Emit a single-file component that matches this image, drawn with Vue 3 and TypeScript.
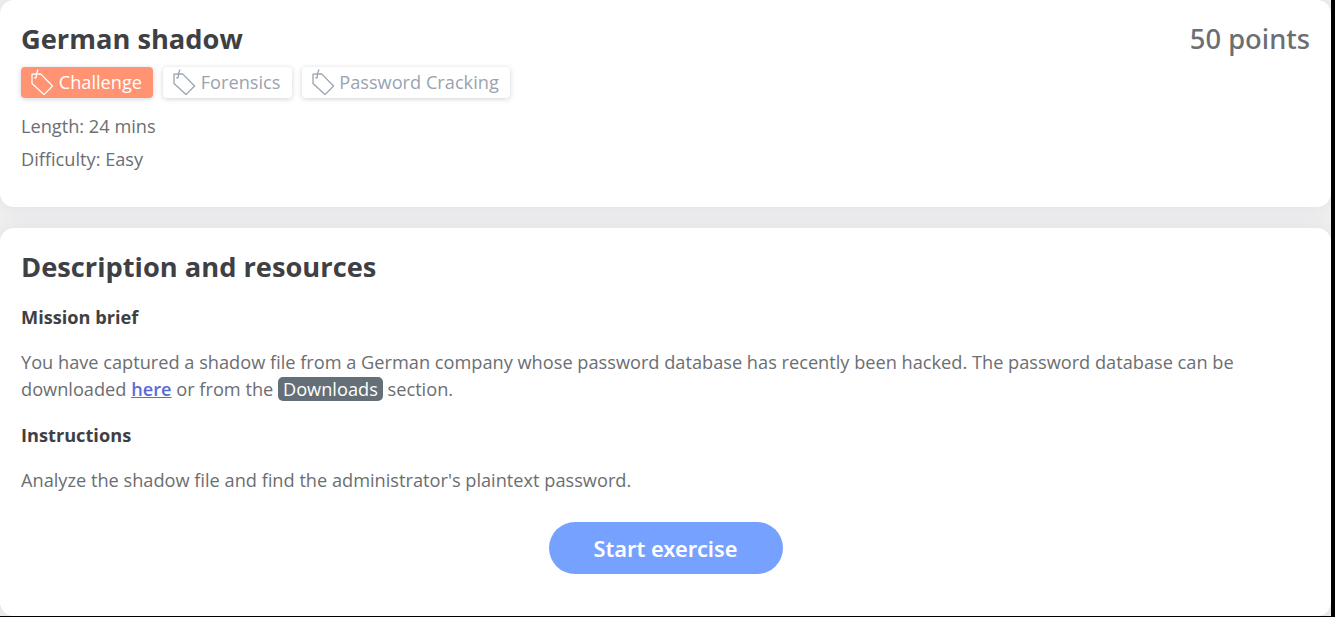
<script setup lang="ts">
interface Tag {
  label: string
  active: boolean
}

const tags: Tag[] = [
  { label: 'Challenge', active: true },
  { label: 'Forensics', active: false },
  { label: 'Password Cracking', active: false },
]
</script>

<template>
  <div class="page">
    <main class="content">
      <section class="card summary">
        <header class="summary-head">
          <h1>German shadow</h1>
          <span class="points">50 points</span>
        </header>
        <div class="tags">
          <span v-for="tag in tags" :key="tag.label" class="tag" :class="{ active: tag.active }">
            <svg class="tag-icon" width="24" height="28" viewBox="0 0 24 28" fill="none" stroke="currentColor" stroke-width="1.3" stroke-linejoin="round" stroke-linecap="round">
              <path d="M2 5.2L10.6 4.9L22.6 17L14 25.6L2 14.4Z" />
              <path d="M7.8 1L6.3 5.2V8.2Q5.6 9.6 4.8 8.6" />
            </svg>
            <span class="tag-label">{{ tag.label }}</span>
          </span>
        </div>
        <p class="meta">Length: 24 mins</p>
        <p class="meta">Difficulty: Easy</p>
      </section>

      <section class="card details">
        <h1>Description and resources</h1>
        <h2>Mission brief</h2>
        <p>
          You have captured a shadow file from a German company whose password database has recently been hacked. The password database can be downloaded <a href="#">here</a> or from the <span class="chip">Downloads</span> section.
        </p>
        <h2>Instructions</h2>
        <p>Analyze the shadow file and find the administrator's plaintext password.</p>
        <button type="button" class="start">Start exercise</button>
      </section>
    </main>
  </div>
</template>

<style>
body {
  background: #000;
  overflow: hidden;
}
</style>

<style scoped>
.page {
  box-sizing: border-box;
  height: 617px;
  padding: 0 4px 1px 0;
  background: #000;
  font-family: "Open Sans", "Noto Sans", sans-serif;
  font-size: 18.2px;
  color: #6b6e72;
}

.content {
  display: flex;
  flex-direction: column;
  gap: 21px;
  height: 616px;
  overflow: hidden;
  background: #f0f0f1;
}

.card {
  box-sizing: border-box;
  padding: 20px 21px;
  border-radius: 14px;
  background: #fff;
  box-shadow: 0 0 20px rgba(50, 50, 75, 0.09);
}

.summary {
  height: 207px;
}

.details {
  display: flex;
  flex-direction: column;
  height: 388px;
}

h1 {
  margin: 0;
  font-size: 27.25px;
  line-height: 38px;
  font-weight: 700;
  color: #3e4044;
}

.summary-head {
  display: flex;
  justify-content: space-between;
}

.points {
  font-family: "Noto Sans", "Open Sans", sans-serif;
  font-size: 27.3px;
  line-height: 38px;
  font-weight: 500;
}

.tags {
  display: flex;
  gap: 10px;
  margin: 9px 0 12px;
}

.tag {
  display: flex;
  align-items: center;
  box-sizing: border-box;
  height: 31px;
  padding: 0 11px 0 9px;
  border-radius: 4px;
  background: #fff;
  color: #9aa3b0;
  box-shadow: 0 1px 5px rgba(70, 80, 100, 0.25);
}

.tag.active {
  background: #ff9372;
  color: #fff;
}

.tag-icon {
  flex: none;
  margin-right: 4.7px;
}

.tag-label {
  padding-bottom: 2px;
}

.meta {
  margin: 0;
  line-height: 33px;
}

h2 {
  margin: 18px 0 0;
  font-size: 18.2px;
  line-height: 27px;
  font-weight: 700;
  color: #3e4044;
}

.details p {
  margin: 18px 0 1px;
  line-height: 27px;
}

a {
  color: #5b6bd6;
  font-weight: 600;
}

.chip {
  padding: 0 5px;
  border-radius: 5px;
  background: #656f77;
  color: #fff;
}

.start {
  align-self: center;
  width: 234px;
  height: 52px;
  margin-top: 27px;
  padding: 0;
  border: 0;
  border-radius: 26px;
  background: #77a1ff;
  color: #fff;
  font-family: "Noto Sans", "Open Sans", sans-serif;
  font-size: 21.8px;
  font-weight: 600;
}
</style>
